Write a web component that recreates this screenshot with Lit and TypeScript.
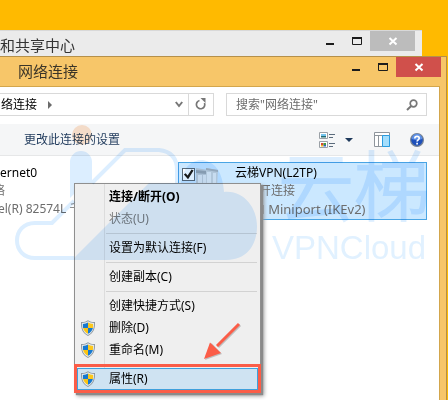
import { LitElement, html, css, nothing } from "lit";
import { customElement, property } from "lit/decorators.js";

type Entry = { label: string; shield?: boolean; kind?: "bold" | "disabled" | "active" } | null;

const entries: Entry[] = [
  { label: "连接/断开(O)", kind: "bold" },
  { label: "状态(U)", kind: "disabled" },
  null,
  { label: "设置为默认连接(F)" },
  null,
  { label: "创建副本(C)" },
  null,
  { label: "创建快捷方式(S)" },
  { label: "删除(D)", shield: true },
  { label: "重命名(M)", shield: true },
  null,
  { label: "属性(R)", shield: true, kind: "active" },
];

const shieldIcon = html`<svg width="16" height="16" viewBox="0 0 16 16" aria-hidden="true">
  <path d="M8 .2C6 1.6 3.800 2.100 1 2C.7 8.600 2.400 13.200 8 16C13.600 13.200 15.300 8.600 15 2C12.200 2.100 10 1.600 8 .2Z" fill="#8d979e" />
  <path d="M8 1.200C6.200 2.400 4.300 2.900 1.900 2.900C1.800 8.400 3.300 12.400 8 15C12.700 12.400 14.200 8.400 14.100 2.900C11.700 2.900 9.800 2.400 8 1.200Z" fill="#e6eaec" />
  <path d="M8 2.600V8H3.100C2.900 6.800 2.800 5.300 2.900 4C5 3.900 6.600 3.500 8 2.600Z" fill="#1679d0" />
  <path d="M8 2.600V8H12.900C13.100 6.800 13.200 5.300 13.100 4C11 3.900 9.400 3.500 8 2.600Z" fill="#fcc81c" />
  <path d="M8 13.700V8H3.100C3.700 10.600 5.200 12.400 8 13.700Z" fill="#fbc414" />
  <path d="M8 13.700V8H12.900C12.300 10.600 10.800 12.400 8 13.700Z" fill="#1679d0" />
</svg>`;

@customElement("window-buttons")
class WindowButtons extends LitElement {
  @property({ type: Boolean, reflect: true }) focused = false;

  static styles = css`
    :host { display: flex; --close: #bcbcbc; }
    :host([focused]) { --close: #d0504b; }
    .btn { width: 27px; height: 20px; padding: 0; border: 0; background: none; display: block; }
    .close { width: 45px; background: var(--close); }
    svg { display: block; margin: auto; }
  `;

  render() {
    return html`
      <button class="btn" aria-label="最小化">
        <svg width="10" height="10"><path d="M1 8h8" stroke="#1c1c1c" stroke-width="2" /></svg>
      </button>
      <button class="btn" aria-label="最大化">
        <svg width="10" height="10"><path d="M.5 1.5v7h9v-7z" fill="none" stroke="#1c1c1c" /><path d="M0 2h10" stroke="#1c1c1c" stroke-width="2" /></svg>
      </button>
      <button class="btn close" aria-label="关闭">
        <svg width="10" height="10"><path d="M1.500 2l7 6.500M8.500 2l-7 6.500" stroke="#fff" stroke-width="2" /></svg>
      </button>
    `;
  }
}

@customElement("context-menu")
class ContextMenu extends LitElement {
  static styles = css`
    :host { display: block; }
    .menu {
      position: relative;
      border: 1px solid #8f8f8f;
      background: linear-gradient(90deg, #efefef 29px, #dcdcdc 29px, #dcdcdc 30px, #efefef 30px);
      box-shadow: 2px 2px 1px #8a8a8a, 3px 3px 4px #999;
      padding: 2px;
    }
    .item {
      display: flex;
      align-items: center;
      width: 100%;
      height: 22px;
      padding: 0;
      border: 0;
      background: none;
      font: inherit;
      color: #000;
      text-align: left;
      white-space: nowrap;
    }
    .bold { font-weight: 700; }
    .disabled { color: #7b7b7b; }
    .active { background: #cfe3f2; outline: 1px solid #3fa0dc; outline-offset: -1px; }
    .icon { width: 16px; margin: 0 13px 0 3px; height: 16px; flex: none; }
    .sep { height: 1px; margin: 3px 1px 3px 29px; border: 0; background: #d2d2d2; }
    .mark { position: absolute; left: -1px; right: -1px; bottom: -1px; height: 23px; border: 3px solid #fb5d48; }
    .arrow { position: absolute; right: 18px; bottom: 31px; display: block; }
  `;

  render() {
    return html`<div class="menu" role="menu">
      ${entries.map((e) =>
        e === null
          ? html`<hr class="sep" />`
          : html`<button class="item ${e.kind ?? ""}" role="menuitem" ?disabled=${e.kind === "disabled"}>
              <span class="icon">${e.shield ? shieldIcon : nothing}</span><span>${e.label}</span>
            </button>`
      )}
      <div class="mark"></div>
      <svg class="arrow" width="40" height="40" viewBox="0 0 40 40" aria-hidden="true">
        <g transform="translate(1 1)" opacity=".25"><path d="M37 3L15 25" stroke="#333" stroke-width="3" /><path d="M2 38L8.500 21L19 32Z" fill="#333" /></g>
        <path d="M37 3L15 25" stroke="#fb5d48" stroke-width="3" />
        <path d="M2 38L8 21.500L19 32Z" fill="#fb5d48" />
      </svg>
    </div>`;
  }
}

@customElement("app-root")
class AppRoot extends LitElement {
  static styles = css`
    :host {
      display: block;
      font: 12px/18px "Noto Sans", "Noto Sans CJK SC", sans-serif;
      color: #000;
    }
    .desktop {
      position: relative;
      min-height: 100vh;
      box-sizing: border-box;
      padding-top: 30px;
      background: #ffba00;
      display: flex;
      flex-direction: column;
      overflow: hidden;
      isolation: isolate;
    }
    .back, .titlebar { display: flex; justify-content: space-between; font-size: 15px; color: #3b3528; }
    .back {
      margin-right: 26px;
      height: 26px;
      box-sizing: border-box;
      border-top: 1px solid #d8d8d8;
      background: #ebebeb;
      padding-right: 7px;
      line-height: 28px;
      color: #333;
    }
    .front {
      flex: 1;
      display: flex;
      flex-direction: column;
      margin-right: 1px;
      background: #f7c669;
      border-top: 1px solid #b5904a;
      border-right: 1px solid #b5904a;
    }
    .titlebar { height: 29px; padding: 0 5px 0 18px; line-height: 28px; }
    .client {
      flex: 1;
      display: flex;
      flex-direction: column;
      margin-right: 6px;
      background: #fff;
      border-top: 1px solid #d3a64c;
      border-right: 1px solid #d3a64c;
    }
    .nav { display: flex; gap: 12px; padding: 6px 12px 8px 0; height: 23px; }
    .address, .search {
      box-sizing: border-box;
      border: 1px solid #d9d9d9;
      display: flex;
      align-items: center;
      background: #fff;
    }
    .address { width: 214px; border-left: 0; }
    .crumb, .tool { border: 0; padding: 0; background: none; font: inherit; color: inherit; display: flex; align-items: center; }
    .crumb { padding-left: 1px; gap: 10px; flex: 1; }
    .drop { width: 18px; justify-content: center; }
    .refresh { width: 25px; align-self: stretch; justify-content: center; border-left: 1px solid #d9d9d9; }
    .search { flex: 1; min-width: 0; padding: 0 8px 0 9px; }
    .search input { flex: 1; min-width: 0; border: 0; padding: 0; outline: 0; font: inherit; background: none; }
    .search input::placeholder { color: #6d6d6d; opacity: 1; }
    .toolbar {
      display: flex;
      align-items: center;
      height: 31px;
      background: #f5f6f7;
      border-bottom: 1px solid #e6e7e8;
      padding: 0 15px 0 24px;
      color: #1e395b;
    }
    .change { flex: 1; }
    .views { gap: 9px; margin-right: 21px; }
    .pane { margin-right: 20px; }
    .content { position: relative; flex: 1; padding: 6px 12px 0 0; display: grid; grid-template-columns: 178px 1fr; align-items: start; }
    .conn { overflow: hidden; white-space: nowrap; padding-top: 2px; }
    .line { margin: 0; color: #6d6d6d; }
    .name { color: #000; }
    .device { font-size: 13px; }
    .cut { text-indent: -7px; }
    .trim { text-indent: -2px; }
    .selected {
      display: flex;
      align-items: flex-start;
      border: 1px solid #4aa5e4;
      background: #cbe8ff;
      padding: 1px 0;
      height: 54px;
    }
    .tick {
      appearance: none;
      width: 13px;
      height: 13px;
      margin: 4px 0 0 3px;
      border: 1px solid #5a6a78;
      background: #fff;
      flex: none;
      display: grid;
    }
    .tick::before {
      content: "";
      background: #1b1b1b;
      clip-path: polygon(8% 50%, 24% 38%, 42% 60%, 78% 4%, 96% 14%, 46% 94%);
    }
    .adapter { flex: none; width: 24px; height: 24px; margin: 1px 16px 0 0; }
    .menu { position: absolute; left: 74px; top: 27px; width: 187px; }
    .watermark { position: absolute; left: 0; top: 120px; mix-blend-mode: multiply; pointer-events: none; }
    .latin { font: 33px "Liberation Sans", sans-serif; fill: #e1f1ff; }
    .han { font: 300 76px "Noto Sans CJK SC", sans-serif; stroke: #dceeff; stroke-width: 2px; }
  `;

  render() {
    return html`
      <div class="desktop">
        <div class="back"><span>和共享中心</span><window-buttons></window-buttons></div>
        <section class="front">
          <header class="titlebar"><span>网络连接</span><window-buttons focused></window-buttons></header>
          <div class="client">
            <div class="nav">
              <div class="address">
                <button class="crumb">络连接
                  <svg width="6" height="8"><path d="M1 0v8l4-4z" fill="#6b6b6b" /></svg>
                </button>
                <button class="tool drop" aria-label="展开">
                  <svg width="8" height="7"><path d="M.8 1l3.200 4L7.200 1" fill="none" stroke="#777" stroke-width="2" /></svg>
                </button>
                <button class="tool refresh" aria-label="刷新">
                  <svg width="12" height="13" viewBox="0 0 12 13"><path d="M4.500 2.500A4.200 4.200 0 1 0 9.500 5" fill="none" stroke="#777" stroke-width="1.700" /><path d="M5.500 0h5v5z" fill="#777" /></svg>
                </button>
              </div>
              <label class="search">
                <input type="search" aria-label="搜索" placeholder='搜索"网络连接"' />
                <svg width="12" height="12"><circle cx="7.500" cy="4.500" r="3.300" fill="none" stroke="#777" stroke-width="1.700" /><path d="M5.200 7L1 11" stroke="#777" stroke-width="2" /></svg>
              </label>
            </div>
            <div class="toolbar">
              <div class="change"><button class="tool">更改此连接的设置</button></div>
              <button class="tool views" aria-label="更改视图">
                <svg width="17" height="16">
                  <path d="M.5.5h8v6h-8zM.5 9.500h8v6h-8z" fill="#fff" stroke="#9aa0a6" />
                  <path d="M2 2h5v2H2z" fill="#74c4ee" /><path d="M2 4h5v1.500H2z" fill="#246a70" />
                  <path d="M2 11h2.500v2H2z" fill="#d94632" /><path d="M4.500 11H7v2H4.500z" fill="#3f9a45" /><path d="M2 13h2.500v1.500H2z" fill="#f0b51d" /><path d="M4.500 13H7v1.500H4.500z" fill="#2d63c0" />
                  <path d="M10 2.500h6M10 5.500h4M10 11.500h6M10 14.500h4" stroke="#5b6b7c" />
                </svg>
                <svg width="8" height="4"><path d="M0 0h8L4 4z" fill="#1e395b" /></svg>
              </button>
              <button class="tool pane" aria-label="预览窗格">
                <svg width="16" height="15"><path d="M.5.5h15v14H.5zM0 3.500h16M4.500 3v12" fill="#fff" stroke="#8e959c" /><path d="M8.500 3.500h7v11h-7z" fill="#a5defc" stroke="#2b9ce0" /></svg>
              </button>
              <button class="tool" aria-label="帮助">
                <svg width="14" height="14"><circle cx="7" cy="7" r="6.400" fill="#1e50ba" stroke="#7c8794" stroke-width="1.200" /><path d="M1.700 6a5.300 5.300 0 0 1 10.600 0Q7 8 1.700 6z" fill="#5c8fe6" /><path d="M4.800 5.400C4.800 2.600 9.300 2.700 9.200 5.200C9.100 6.700 7.100 6.900 7.100 8.500M7.100 9.800v1.700" fill="none" stroke="#fff" stroke-width="1.700" /></svg>
              </button>
            </div>
            <main class="content">
              <div class="conn">
                <p class="line name">ernet0</p>
                <p class="line cut">络</p>
                <p class="line trim">el(R) 82574L 千兆</p>
              </div>
              <div class="selected">
                <input class="tick" type="checkbox" checked aria-label="云梯VPN(L2TP)" />
                <svg class="adapter" viewBox="0 0 24 24" aria-hidden="true">
                  <path d="M1 3l12 2v17H1z" fill="#c3ccd4" />
                  <path d="M1 5l10 1v3L1 8z" fill="#9aa6b1" />
                  <path d="M3 10h4v11H3zM8 10h3v11H8z" fill="#e2e8ed" />
                  <path d="M11 3l12 2-1 17H11z" fill="#ccd4da" /><path d="M11 3l12 2v2L11 5z" fill="#aab4bd" />
                  <path d="M12 7h4v14h-4zM18 8h3v13h-3z" fill="#e7ecf0" />
                </svg>
                <div class="text">
                  <p class="line name">云梯VPN(L2TP)</p>
                  <p class="line">已断开连接</p>
                  <p class="line device">WAN Miniport (IKEv2)</p>
                </div>
              </div>
              <context-menu class="menu"></context-menu>
            </main>
          </div>
        </section>
        <svg class="watermark" width="440" height="150" viewBox="0 120 440 150" fill="#dceeff" aria-hidden="true">
          <circle cx="82" cy="135" r="10" fill="#fde3cf" />
          <path d="M70 162a11 11 0 0 1 22 0V183H74V194L70 198Z" />
          <path d="M72 260L149 183H181Q184 160 203 160Q222 163 224 192C244 190 257 208 257 226C257 246 246 260 226 260Z" />
          <path d="M74 258H35C11 258 11 223 35 223H52L74 201M92 183L125 150H159Q177 152 177 170V183" fill="none" stroke="#dceeff" stroke-width="4" />
          <text class="han" x="278" y="215">云梯</text>
          <text class="latin" x="272" y="259">VPNCloud</text>
        </svg>
      </div>
    `;
  }
}
